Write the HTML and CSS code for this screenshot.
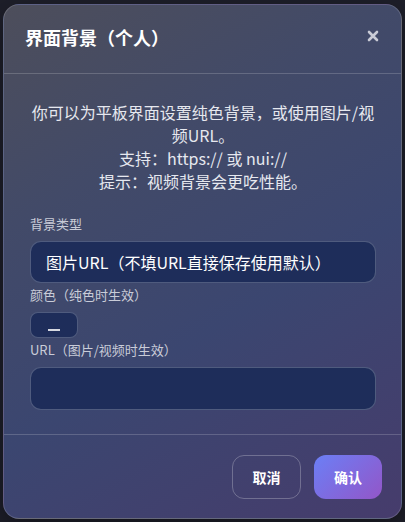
FILE: index.html
```html
<!DOCTYPE html>
<html lang="zh-CN">
<head>
    <meta charset="UTF-8">
    <meta name="viewport" content="width=device-width, initial-scale=1.0">
    <title>界面背景（个人）</title>
    <link rel="stylesheet" href="styles.css">
</head>
<body>
    <div class="modal">
        <div class="modal-header">
            <h2>界面背景（个人）</h2>
            <button class="close" aria-label="关闭">
                <svg width="12" height="12" viewBox="0 0 12 12">
                    <path d="M2 2 L10 10 M10 2 L2 10" stroke="currentColor" stroke-width="2.6" stroke-linecap="round"/>
                </svg>
            </button>
        </div>
        <div class="modal-body">
            <p class="desc">你可以为平板界面设置纯色背景，或使用图片/视频URL。<br>支持：https:// 或 nui://<br>提示：视频背景会更吃性能。</p>

            <label class="label">背景类型</label>
            <select class="field">
                <option>图片URL（不填URL直接保存使用默认）</option>
                <option>纯色</option>
                <option>视频URL</option>
            </select>

            <label class="label">颜色（纯色时生效）</label>
            <div class="color-pick"><span></span></div>

            <label class="label">URL（图片/视频时生效）</label>
            <input class="field url" type="text">
        </div>
        <div class="modal-footer">
            <button class="btn btn-cancel">取消</button>
            <button class="btn btn-ok">确认</button>
        </div>
    </div>
</body>
</html>
```

FILE: styles.css
```css
* {
    box-sizing: border-box;
    margin: 0;
    font-family: "Noto Sans CJK SC", "Noto Sans", sans-serif;
}

body {
    background: #1e1f2a;
    padding: 4px 3px 3px 3px;
    height: 522px;
    overflow: hidden;
}

.modal {
    height: 515px;
    display: flex;
    flex-direction: column;
    border: 1px solid rgba(255, 255, 255, 0.16);
    border-radius: 16px;
    background: linear-gradient(150deg, #4d4e5b 0%, #424a68 30%, #3b4670 60%, #463c6c 100%);
    box-shadow: 0 10px 30px rgba(0, 0, 0, 0.4);
    overflow: hidden;
}

.modal-header {
    display: flex;
    align-items: center;
    justify-content: space-between;
    height: 69px;
    padding: 0 20px 4px 21px;
    border-bottom: 1px solid rgba(255, 255, 255, 0.18);
}

.modal-header h2 {
    color: #fff;
    font-size: 18px;
    font-weight: 700;
    line-height: 26px;
}

.close {
    border: none;
    background: none;
    color: #c9cbd6;
    padding: 0;
    width: 16px;
    height: 16px;
    display: flex;
    align-items: center;
    justify-content: center;
    margin-bottom: 3px;
    cursor: pointer;
}

.modal-body {
    flex: 1;
    display: flex;
    flex-direction: column;
    padding: 27px 25px 0 26px;
}

.desc {
    color: #e6e8ef;
    font-size: 16px;
    line-height: 23px;
    text-align: center;
    margin-bottom: 22px;
}

.label {
    color: #c9ccd8;
    font-size: 13px;
    line-height: 18px;
    margin-bottom: 8px;
}

.field {
    appearance: none;
    width: 100%;
    height: 42px;
    border: 1px solid rgba(255, 255, 255, 0.22);
    border-radius: 11px;
    background: #1e2d5a;
    color: #fff;
    font-size: 16px;
    padding: 0 15px;
    outline: 0;
    margin-bottom: 3px;
}

.url {
    height: 43px;
}

.color-pick {
    width: 48px;
    height: 26px;
    border: 1px solid rgba(255, 255, 255, 0.22);
    border-radius: 8px;
    background: #1e2d5a;
    display: flex;
    align-items: flex-end;
    justify-content: center;
    padding-bottom: 6px;
    margin-bottom: 3px;
}

.color-pick span {
    width: 12px;
    height: 2px;
    background: #d6d8e0;
}

.modal-footer {
    display: flex;
    justify-content: flex-end;
    gap: 13px;
    height: 84px;
    padding: 20px 19px 0 0;
    border-top: 1px solid rgba(255, 255, 255, 0.18);
}

.btn {
    height: 44px;
    padding: 0;
    border-radius: 12px;
    font-size: 14px;
    font-weight: 700;
    color: #fff;
    white-space: nowrap;
    cursor: pointer;
}

.btn-cancel {
    width: 69px;
    background: transparent;
    border: 1px solid rgba(255, 255, 255, 0.25);
}

.btn-ok {
    width: 68px;
    border: none;
    background: linear-gradient(135deg, #6b7ff6, #9356c8);
}
```
